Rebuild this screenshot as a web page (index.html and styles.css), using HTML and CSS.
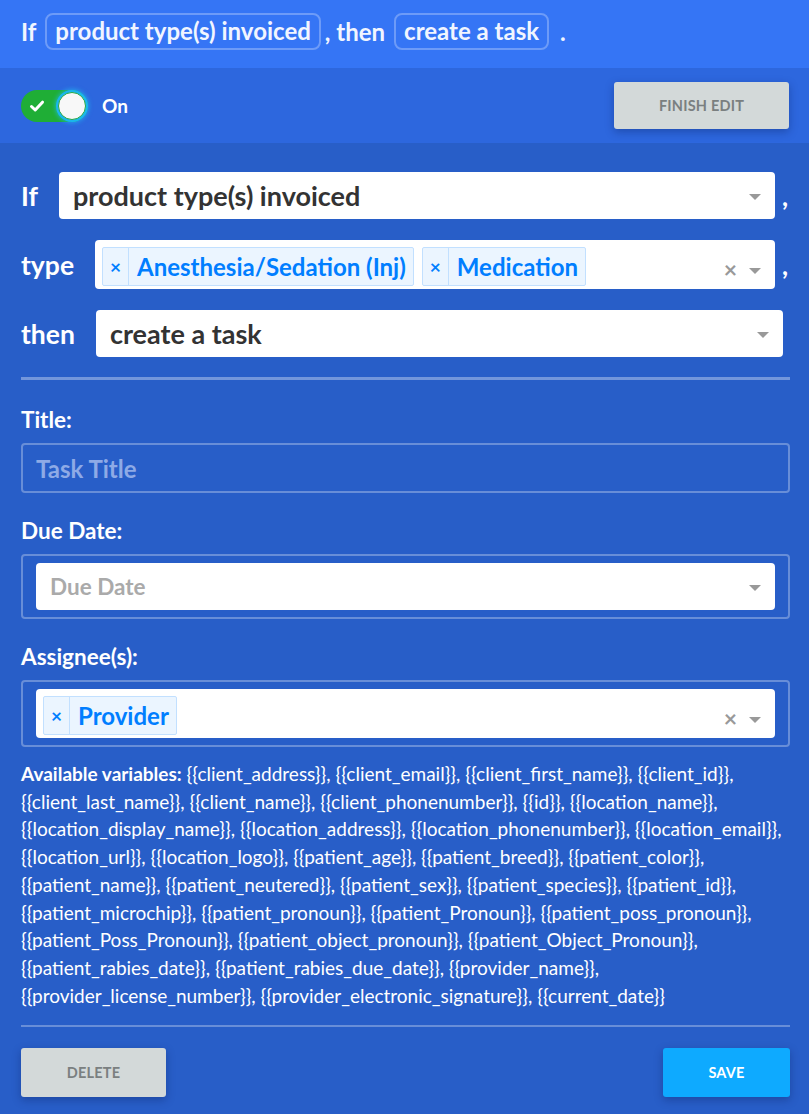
FILE: index.html
```html
<!DOCTYPE html>
<html lang="en">
<head>
<meta charset="utf-8">
<title>Rule editor</title>
<link rel="stylesheet" href="styles.css">
</head>
<body>
<div class="rule">
  <header class="summary">
    <span class="word-if">If</span>
    <span class="chip">product type(s) invoiced</span>
    <span class="word-then">, then</span>
    <span class="chip">create a task</span>
    <span class="dot">.</span>
  </header>

  <div class="toolbar">
    <div class="switch-group">
      <span class="switch">
        <svg class="check" viewBox="0 0 16 16" width="16" height="16"><path d="M2.5 8.5 L6.2 12 L13.5 4.2" fill="none" stroke="#fff" stroke-width="3" stroke-linecap="round" stroke-linejoin="round"/></svg>
        <span class="knob"></span>
      </span>
      <span class="switch-label">On</span>
    </div>
    <button class="btn btn-grey btn-finish">Finish Edit</button>
  </div>

  <main class="editor">
    <div class="cond-row">
      <span class="cond-label">If</span>
      <div class="select">
        <span class="select-value">product type(s) invoiced</span>
        <span class="arrow"></span>
      </div>
      <span class="comma">,</span>
    </div>

    <div class="cond-row">
      <span class="cond-label">type</span>
      <div class="select select-multi">
        <div class="tags">
          <span class="tag"><span class="tag-x">×</span><span class="tag-label">Anesthesia/Sedation (Inj)</span></span>
          <span class="tag"><span class="tag-x">×</span><span class="tag-label">Medication</span></span>
        </div>
        <span class="clear">×</span>
        <span class="arrow"></span>
      </div>
      <span class="comma">,</span>
    </div>

    <div class="cond-row cond-row-last">
      <span class="cond-label">then</span>
      <div class="select">
        <span class="select-value">create a task</span>
        <span class="arrow"></span>
      </div>
    </div>

    <hr class="rule-divider">

    <div class="field">
      <label class="field-label">Title:</label>
      <div class="text-input"><span class="placeholder-light">Task Title</span></div>
    </div>

    <div class="field">
      <label class="field-label">Due Date:</label>
      <div class="field-box">
        <div class="select">
          <span class="placeholder">Due Date</span>
          <span class="arrow"></span>
        </div>
      </div>
    </div>

    <div class="field">
      <label class="field-label">Assignee(s):</label>
      <div class="field-box">
        <div class="select select-multi">
          <div class="tags">
            <span class="tag"><span class="tag-x">×</span><span class="tag-label">Provider</span></span>
          </div>
          <span class="clear">×</span>
          <span class="arrow"></span>
        </div>
      </div>
    </div>

    <p class="variables"><strong>Available variables:</strong> {{client_address}}, {{client_email}}, {{client_first_name}}, {{client_id}},<br>{{client_last_name}}, {{client_name}}, {{client_phonenumber}}, {{id}}, {{location_name}},<br>{{location_display_name}}, {{location_address}}, {{location_phonenumber}}, {{location_email}},<br>{{location_url}}, {{location_logo}}, {{patient_age}}, {{patient_breed}}, {{patient_color}},<br>{{patient_name}}, {{patient_neutered}}, {{patient_sex}}, {{patient_species}}, {{patient_id}},<br>{{patient_microchip}}, {{patient_pronoun}}, {{patient_Pronoun}}, {{patient_poss_pronoun}},<br>{{patient_Poss_Pronoun}}, {{patient_object_pronoun}}, {{patient_Object_Pronoun}},<br>{{patient_rabies_date}}, {{patient_rabies_due_date}}, {{provider_name}},<br>{{provider_license_number}}, {{provider_electronic_signature}}, {{current_date}}</p>

    <hr class="footer-divider">

    <div class="actions">
      <button class="btn btn-grey btn-delete">Delete</button>
      <button class="btn btn-save">Save</button>
    </div>
  </main>
</div>
</body>
</html>
```

FILE: styles.css
```css
* { box-sizing: border-box; }

html, body {
  margin: 0;
  padding: 0;
  background: #285ec8;
  font-family: Lato, "Noto Sans", sans-serif;
  font-weight: 700;
  color: #fff;
}

.rule { width: 809px; min-height: 1114px; background: #285ec8; }

/* header summary */
.summary {
  height: 68px;
  background: #3575f5;
  display: flex;
  align-items: center;
  padding: 0 21px 6px;
  font-size: 24px;
  color: #f1f5ff;
  white-space: nowrap;
}
.summary .word-if { margin-right: 9px; }
.summary .word-then { margin: 0 9px 0 4px; }
.summary .chip {
  border: 2px solid rgba(255, 255, 255, 0.28);
  border-radius: 8px;
  padding: 2px 8px 3px;
  line-height: 28px;
}
.summary .dot { margin-left: 11px; }

/* toolbar */
.toolbar {
  height: 75px;
  background: #2d67de;
  display: flex;
  align-items: center;
  justify-content: space-between;
  padding: 0 20px 0 21px;
}
.switch-group { display: flex; align-items: center; gap: 14px; }
.switch {
  position: relative;
  width: 67px;
  height: 32px;
  border-radius: 16px;
  background: #1fae36;
  display: flex;
  align-items: center;
  padding-left: 8px;
}
.switch .knob {
  position: absolute;
  right: 2px;
  top: 2px;
  width: 28px;
  height: 28px;
  border-radius: 50%;
  background: #f8f8f8;
  border: 1px solid #27a844;
  box-shadow: 0 0 0 2px #1ab6ee, 0 0 4px 3px rgba(30, 190, 245, 0.6);
}
.switch-label { font-size: 19px; color: #fff; }

.btn {
  font-family: inherit;
  font-weight: 700;
  text-transform: uppercase;
  border: none;
  border-radius: 3px;
  font-size: 14.5px;
  letter-spacing: 0.2px;
  box-shadow: 0 3px 8px rgba(10, 30, 90, 0.35);
  cursor: pointer;
}
.btn-grey { background: #d3d9d9; color: #7a7f80; }
.btn-finish { width: 175px; height: 47px; }

/* editor */
.editor { padding: 29px 19px 0 21px; }

.cond-row {
  display: flex;
  align-items: center;
  gap: 21px;
  margin-bottom: 21px;
}
.cond-row-last { padding-right: 7px; margin-bottom: 20px; }
.cond-label { font-size: 26.5px; color: #fff; }
.comma { font-size: 26px; margin-left: -14px; width: 8px; }

.select {
  flex: 1;
  min-height: 47px;
  background: #fff;
  border-radius: 4px;
  display: flex;
  align-items: center;
  padding: 0 14px;
  color: #333;
  font-size: 27px;
}
.select-value { flex: 1; }
.select-multi {
  padding: 7px 14px 2px 7px;
  min-height: 49px;
  align-items: flex-start;
}
.select-multi .clear,
.select-multi .arrow { align-self: center; }
.tags { flex: 1; display: flex; gap: 8px; }
.tag {
  display: flex;
  align-items: stretch;
  background: #ebf5ff;
  border: 1px solid #c2e0ff;
  border-radius: 2px;
  color: #007eff;
  font-size: 24px;
  height: 39px;
}
.tag-x {
  width: 26px;
  display: flex;
  align-items: center;
  justify-content: center;
  border-right: 1px solid #c2e0ff;
  font-size: 19px;
}
.tag-label { display: flex; align-items: center; padding: 0 7px 0 8px; }
.clear { color: #999; font-size: 23px; margin-right: 12px; line-height: 1; margin-top: 4px; }
.arrow {
  width: 0;
  height: 0;
  border-left: 6px solid transparent;
  border-right: 6px solid transparent;
  border-top: 6px solid #999;
  margin-top: 3px;
}
.select-multi .arrow { margin-top: 7px; }
.placeholder { flex: 1; color: #aaa; font-size: 22.5px; }

.rule-divider {
  border: none;
  height: 3px;
  background: rgba(255, 255, 255, 0.35);
  margin: 0 0 28px;
}

.field { margin-bottom: 26px; }
.field-label { display: block; font-size: 22.5px; margin-bottom: 11px; line-height: 24px; }
.text-input {
  height: 50px;
  border: 2px solid rgba(255, 255, 255, 0.3);
  border-radius: 4px;
  display: flex;
  align-items: center;
  padding: 0 13px;
}
.placeholder-light { color: #8eaae6; font-size: 24px; }
.field-box {
  border: 2px solid rgba(255, 255, 255, 0.3);
  border-radius: 4px;
  padding: 7px 13px;
}

.variables {
  font-size: 19px;
  line-height: 27.7px;
  margin: -13px 0 0;
  font-weight: 400;
  color: #fff;
  white-space: nowrap;
}
.variables strong { font-weight: 700; }

.footer-divider {
  border: none;
  height: 2px;
  background: rgba(255, 255, 255, 0.3);
  margin: 16px 0 21px;
}

.actions { display: flex; justify-content: space-between; }
.btn-delete { width: 145px; height: 49px; }
.btn-save { width: 127px; height: 49px; background: #0eaaff; color: #fff; }
```
